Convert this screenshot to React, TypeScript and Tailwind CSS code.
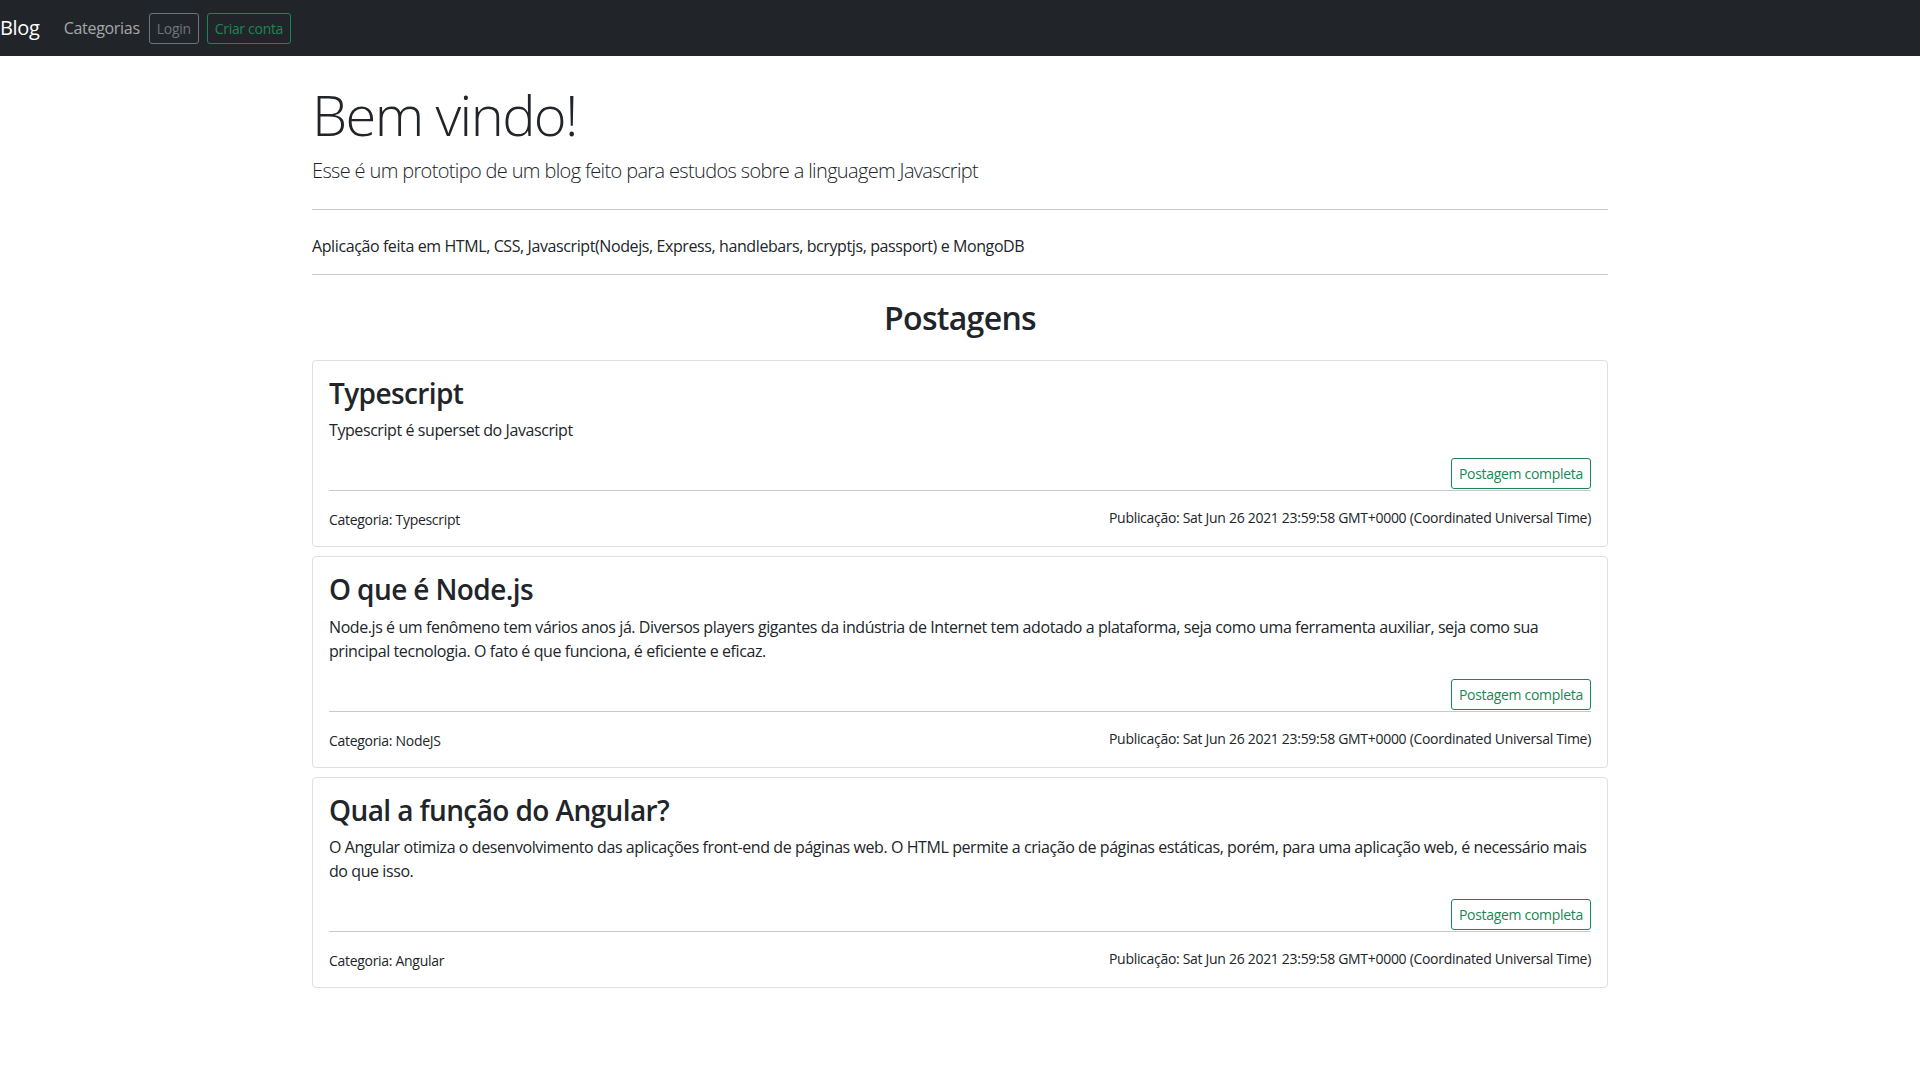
import React from "react";

const posts = [
  {
    title: "Typescript",
    text: "Typescript é superset do Javascript",
    cat: "Typescript",
  },
  {
    title: "O que é Node.js",
    text: "Node.js é um fenômeno tem vários anos já. Diversos players gigantes da indústria de Internet tem adotado a plataforma, seja como uma ferramenta auxiliar, seja como sua principal tecnologia. O fato é que funciona, é eficiente e eficaz.",
    cat: "NodeJS",
  },
  {
    title: "Qual a função do Angular?",
    text: "O Angular otimiza o desenvolvimento das aplicações front-end de páginas web. O HTML permite a criação de páginas estáticas, porém, para uma aplicação web, é necessário mais do que isso.",
    cat: "Angular",
  },
];

export default function App() {
  return (
    <div
      className="min-h-screen bg-white text-[#212529] text-[16px] leading-[1.5]"
      style={{ fontFamily: '"Open Sans", "Noto Sans", sans-serif' }}
    >
      <nav className="h-[56px] bg-[#212529] flex items-center">
        <a className="text-white text-[20px] leading-[30px] mr-[16px] tracking-[-0.3px]">Blog</a>
        <a className="text-[rgba(255,255,255,0.6)] px-[8px] leading-[24px] tracking-[-0.3px]">Categorias</a>
        <button className="ml-[1px] h-[31px] px-[7px] border border-[#6c757d] text-[#6c757d] text-[14px] rounded-[3px] tracking-[-0.3px]">
          Login
        </button>
        <button className="ml-[8px] h-[31px] px-[7px] border border-[#198754] text-[#198754] text-[14px] rounded-[3px] tracking-[-0.3px]">
          Criar conta
        </button>
      </nav>

      <div className="mx-auto w-full max-w-[1320px] px-3 pt-[25px]">
        <h1 className="text-[56px] font-light leading-[1.2] mb-[8px] tracking-[-1.6px]">Bem vindo!</h1>
        <p className="text-[20px] font-light leading-[30px] tracking-[-0.65px]">
          Esse é um prototipo de um blog feito para estudos sobre a linguagem Javascript
        </p>
        <hr className="mt-[23px] mb-[24px] border-0 border-t border-[#c8c9ca]" />
        <p className="leading-[24px] tracking-[-0.4px]">
          Aplicação feita em HTML, CSS, Javascript(Nodejs, Express, handlebars, bcryptjs, passport) e MongoDB
        </p>
        <hr className="mt-[16px] border-0 border-t border-[#c8c9ca]" />
        <h2 className="mt-[24px] mb-[22px] text-center text-[32px] font-semibold leading-[1.2] tracking-[-0.7px]">
          Postagens
        </h2>

        <div className="flex flex-col gap-[9px] pb-[40px]">
          {posts.map((p) => (
            <div key={p.title} className="border border-[#dfdfdf] rounded-[4px] p-[16px]">
              <h3 className="text-[28px] font-semibold leading-[1.2] mb-[8px] tracking-[-0.6px]">{p.title}</h3>
              <p className="leading-[24px] mb-[16px] tracking-[-0.42px]">{p.text}</p>
              <div className="flex justify-end">
                <button className="h-[31px] px-[7px] border border-[#198754] text-[#198754] text-[14px] rounded-[3px] tracking-[-0.3px]">
                  Postagem completa
                </button>
              </div>
              <hr className="mt-[1px] mb-[16px] border-0 border-t border-[#c8c9ca]" />
              <div className="flex justify-between items-start text-[14px] leading-[21px] tracking-[-0.3px]">
                <span className="mt-[2px]">Categoria: {p.cat}</span>
                <span>Publicação: Sat Jun 26 2021 23:59:58 GMT+0000 (Coordinated Universal Time)</span>
              </div>
            </div>
          ))}
        </div>
      </div>
    </div>
  );
}
